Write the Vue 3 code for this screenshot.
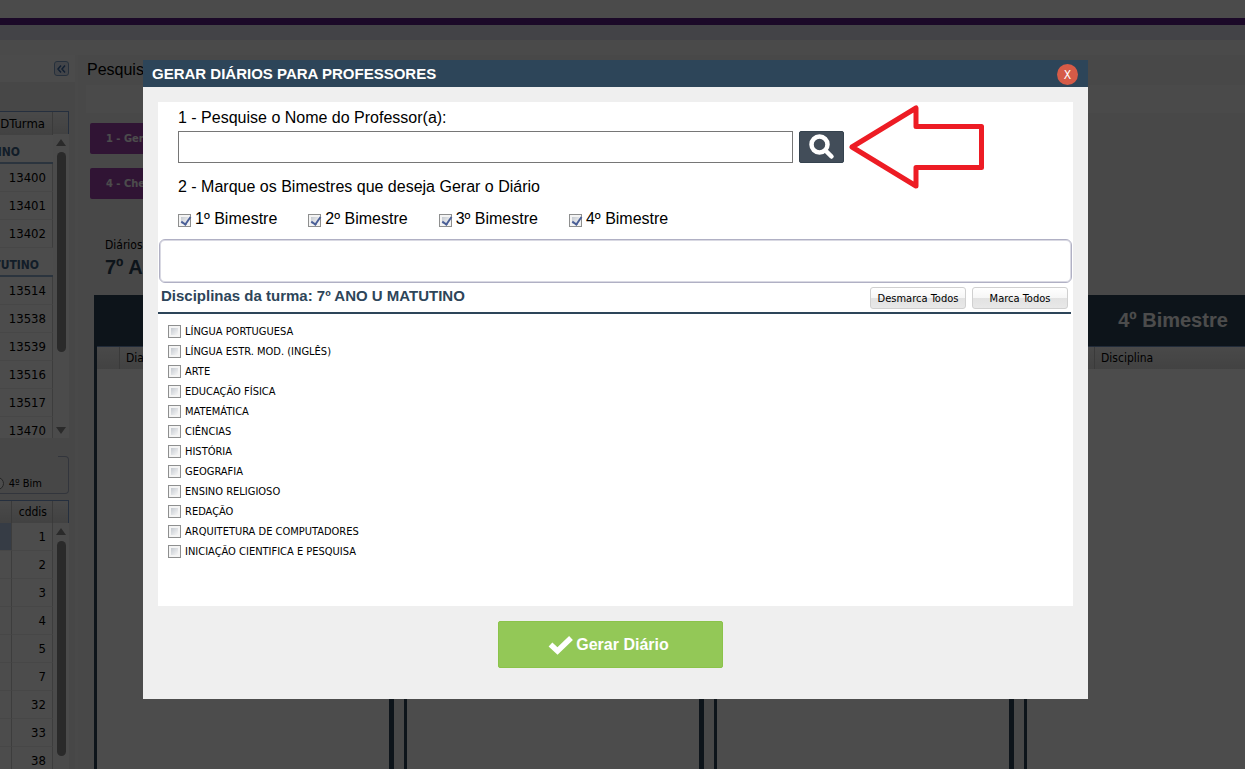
<script setup>
import { ref } from 'vue'

const turmas = [
  { group: 'VESPERTINO', wide: true, ids: [13400, 13401, 13402] },
  { group: 'MATUTINO', wide: false, ids: [13514, 13538, 13539, 13516, 13517, 13470] }
]
const codes = [1, 2, 3, 4, 5, 7, 32, 33, 38]
const quarters = ['1º Bimestre', '2º Bimestre', '3º Bimestre', '4º Bimestre']
const marked = ref([...quarters])
const subjects = [
  'LÍNGUA PORTUGUESA',
  'LÍNGUA ESTR. MOD. (INGLÊS)',
  'ARTE',
  'EDUCAÇÃO FÍSICA',
  'MATEMÁTICA',
  'CIÊNCIAS',
  'HISTÓRIA',
  'GEOGRAFIA',
  'ENSINO RELIGIOSO',
  'REDAÇÃO',
  'ARQUITETURA DE COMPUTADORES',
  'INICIAÇÃO CIENTIFICA E PESQUISA'
]
const chosen = ref([])
const teacher = ref('')
</script>

<template>
  <div class="page">
    <div class="top"></div>
    <div class="subtop"></div>
    <div class="workspace">
      <aside class="sidebar">
        <div class="side-head">
          <button class="collapse" type="button" aria-label="Recolher">
            <svg width="9" height="8" viewBox="0 0 9 8"><path d="M4 0.500 1 4l3 3.500M8 0.500 5 4l3 3.500" /></svg>
          </button>
        </div>
        <div class="grid grid-turmas">
          <div class="grid-main">
            <table>
              <thead><tr><th>CDTurma</th></tr></thead>
              <tbody v-for="t in turmas" :key="t.group">
                <tr class="group"><td :class="{ wide: t.wide }">{{ t.group }}</td></tr>
                <tr v-for="id in t.ids" :key="id"><td>{{ id }}</td></tr>
              </tbody>
            </table>
          </div>
          <div class="scroll">
            <div class="scroll-head"></div>
            <i class="up"></i><div class="thumb"></div><i class="down"></i>
          </div>
        </div>
        <fieldset class="filter">
          <legend></legend>
          <label><input type="radio" name="bim" />4º Bim</label>
        </fieldset>
        <div class="grid grid-codes">
          <div class="grid-main">
            <table>
              <thead><tr><th></th><th class="code">cddis</th></tr></thead>
              <tbody>
                <tr v-for="(c, i) in codes" :key="c">
                  <td :class="{ active: i === 0 }"></td><td class="code">{{ c }}</td>
                </tr>
              </tbody>
            </table>
          </div>
          <div class="scroll">
            <div class="scroll-head"></div>
            <i class="up"></i><div class="thumb"></div>
          </div>
        </div>
      </aside>
      <main class="content">
        <h1>Pesquisa</h1>
        <div class="searchbar"></div>
        <div class="actions">
          <button type="button">1 - Gerar</button>
          <button type="button">4 - Checar</button>
        </div>
        <p class="caption">Diários</p>
        <h2>7º ANO U MATUTINO</h2>
        <div class="columns">
          <section v-for="q in quarters" :key="q" class="column">
            <h3>{{ q }}</h3>
            <div class="col-head"><span></span><span>Dia</span><span>Disciplina</span></div>
          </section>
        </div>
      </main>
    </div>

    <div class="overlay">
      <div class="modal" role="dialog" aria-label="Gerar diários para professores">
        <header class="modal-head">
          <h2>GERAR DIÁRIOS PARA PROFESSORES</h2>
          <button type="button" class="close">X</button>
        </header>
        <div class="panel">
          <div class="form">
            <label for="teacher">1 - Pesquise o Nome do Professor(a):</label>
            <div class="search">
              <input id="teacher" v-model="teacher" type="text" />
              <button type="button" aria-label="Pesquisar">
                <svg width="26" height="26" viewBox="0 0 26 26">
                  <circle cx="10.500" cy="10.500" r="8" fill="none" stroke="#fff" stroke-width="4.500" />
                  <path d="M17 17 22.500 22.500" stroke="#fff" stroke-width="4.500" stroke-linecap="round" />
                </svg>
              </button>
            </div>
            <p>2 - Marque os Bimestres que deseja Gerar o Diário</p>
            <div class="quarters">
              <label v-for="q in quarters" :key="q">
                <input v-model="marked" type="checkbox" :value="q" />{{ q }}
              </label>
            </div>
            <svg class="pointer" width="136" height="86" viewBox="0 0 136 86">
              <path d="M3 43 67 4V22.500H132.500V63.500H67V82Z" />
            </svg>
          </div>
          <div class="result"></div>
          <div class="list-head">
            <h3>Disciplinas da turma: 7º ANO U MATUTINO</h3>
            <button type="button">Desmarca Todos</button>
            <button type="button">Marca Todos</button>
          </div>
          <div class="subjects">
            <label v-for="s in subjects" :key="s">
              <input v-model="chosen" type="checkbox" :value="s" />{{ s }}
            </label>
          </div>
        </div>
        <footer>
          <button type="button" class="generate">
            <svg width="26" height="20" viewBox="0 0 26 20"><path d="M2.500 9.500 9.500 16 23 3" /></svg>
            Gerar Diário
          </button>
        </footer>
      </div>
    </div>
  </div>
</template>

<style>
body { margin: 0; overflow: hidden; }
</style>

<style scoped>
* { box-sizing: border-box; }
h1, h2, h3, p { margin: 0; }
button, input { font: inherit; margin: 0; }
.page {
  height: 100vh;
  display: flex;
  flex-direction: column;
  overflow: hidden;
  background: #f7f7f7;
  color: #000;
  font-family: "Liberation Sans", Arial, sans-serif;
}
.top { height: 25px; flex: none; background: #fbfbfb; border-bottom: 7px solid #5a1f85; }
.subtop { height: 30px; flex: none; background: #f8f8f8; border-top: 15px solid #e2e2ee; }
.workspace { flex: 1; min-height: 0; display: flex; }

.sidebar {
  width: 78px;
  flex: none;
  display: flex;
  flex-direction: column;
  padding-right: 6px;
  background: #eee;
  border-right: 3px solid #f4f4f4;
  font-family: "DejaVu Sans Condensed", "DejaVu Sans", sans-serif;
  overflow: hidden;
}
.side-head {
  height: 27px;
  flex: none;
  margin-right: -6px;
  padding: 6px 6px 0 0;
  display: flex;
  justify-content: flex-end;
  background: #fbfbfb;
}
.collapse {
  width: 15px;
  height: 15px;
  padding: 0;
  border: 1px solid #7fa0c8;
  border-radius: 3px;
  background: #dfe8f4;
  display: grid;
  place-items: center;
}
.collapse svg { fill: none; stroke: #3f6ba5; stroke-width: 1.5; }
.grid { display: flex; overflow: hidden; border-top: 1px solid #7d9fd0; background: #fdfdfd; font-size: 12px; }
.grid-turmas { height: 327px; flex: none; margin-top: 29px; }
.grid-codes { flex: 1; margin-top: 6px; }
.grid-main { flex: 1; min-width: 0; display: flex; justify-content: flex-end; overflow: hidden; }
table { width: 200px; flex: none; border-collapse: separate; border-spacing: 0; table-layout: fixed; align-self: flex-start; }
th {
  height: 22px;
  padding: 0 7px;
  font-size: 13px;
  font-weight: 400;
  text-align: right;
  background: linear-gradient(#f6f6f6, #dcdcdc);
  border-right: 1px solid #c4c4c4;
}
.grid-turmas th { height: 23px; }
td { height: 28px; padding: 0 6px; font-size: 13px; text-align: right; border-right: 1px solid #ccc; border-bottom: 1px solid #ededed; }
.group td { height: 29px; padding: 6px 14px 0; font-size: 12px; line-height: 14px; font-weight: 700; color: #3e6288; border-right: 0; border-bottom: 2px solid #8faed0; }
.group td.wide { padding-right: 33px; }
.code { width: 41px; padding-left: 0; }
th.code { padding-right: 5px; font-size: 12px; }
.active { background: #b5c8e6; }
.scroll { width: 16px; flex: none; display: flex; flex-direction: column; align-items: center; background: #fcfcfc; }
.scroll-head { width: 100%; height: 22px; flex: none; border-right: 1px solid #7d9fd0; background: linear-gradient(#f6f6f6, #dcdcdc); }
.up, .down { width: 0; height: 0; flex: none; border: 5px solid transparent; }
.up { margin-top: 5px; border-top: 0; border-bottom: 7px solid #8c8c8c; }
.down { margin: auto 0 4px; border-bottom: 0; border-top: 7px solid #8c8c8c; }
.thumb { width: 9px; height: 200px; flex: none; margin-top: 6px; border-radius: 5px; background: #8c8c8c; }
.grid-codes .thumb { flex: 1; margin-bottom: 13px; }
.filter {
  height: 38px;
  min-width: 0;
  flex: none;
  margin: 18px 0 0;
  padding: 18px 26px 0 0;
  border: 1px solid #a9b1c8;
  border-left: 0;
  border-radius: 0 4px 4px 0;
  display: flex;
  justify-content: flex-end;
  font-size: 11px;
}
.filter legend { width: 58px; height: 1px; margin-right: -26px; padding: 0; }
.filter label { display: flex; align-items: center; height: 16px; white-space: nowrap; }
.filter input { width: 13px; height: 13px; margin-right: 5px; }

.content { flex: 1; min-width: 0; background: #f0f0f0; overflow: hidden; display: flex; flex-direction: column; }
.content h1 { height: 30px; padding-left: 9px; font-size: 16px; font-weight: 400; line-height: 30px; }
.searchbar { height: 28px; margin-left: 8px; background: #f8f8f8; }
.actions { display: flex; flex-direction: column; align-items: flex-start; gap: 14px; margin: 10px 0 0 12px; }
.actions button {
  width: 140px;
  height: 31px;
  padding: 0 0 0 16px;
  border: 0;
  border-radius: 2px;
  background: #a043b0;
  color: #fff;
  text-align: left;
  font: 700 11px "DejaVu Sans Condensed", "DejaVu Sans", sans-serif;
}
.caption { margin: 38px 0 0 27px; font: 12px/16px "DejaVu Sans Condensed", "DejaVu Sans", sans-serif; }
.content h2 { margin-left: 27px; font-size: 20px; line-height: 28px; color: #2d4559; }
.columns { flex: 1; display: flex; gap: 10px; margin: 14px 0 0 16px; }
.column { width: 300px; flex: none; background: #fdfdfd; border: solid #2d4559; border-width: 0 5px 0 3px; }
.column h3 { height: 51px; font-size: 20px; line-height: 51px; text-align: center; background: #2d4559; color: #fff; }
.col-head { height: 23px; display: flex; border-top: 1px solid #6f92c0; background: linear-gradient(#f4f4f4, #dedede); font: 12px/22px "DejaVu Sans Condensed", "DejaVu Sans", sans-serif; }
.col-head span { width: 45px; padding-left: 6px; border-right: 1px solid #c4c4c4; }
.col-head span:first-child { width: 23px; }
.col-head span:last-child { flex: 1; border: 0; }

.overlay {
  position: fixed;
  inset: 0;
  display: flex;
  justify-content: center;
  align-items: flex-start;
  padding: 60px 14px 0 0;
  background: rgba(0, 0, 0, .7);
}
.modal { width: 945px; max-width: 100%; padding-bottom: 31px; background: #efefef; }
.modal-head { height: 27px; padding: 0 10px 0 9px; display: flex; align-items: center; justify-content: space-between; background: #2d4559; color: #fff; }
.modal-head h2 { font-size: 15px; }
.close { width: 21px; height: 21px; margin-top: 2px; padding: 0; border: 0; border-radius: 50%; background: #d65b47; color: #fff; font: 12px "DejaVu Sans Condensed", sans-serif; }
.panel { margin: 15px; padding-bottom: 45px; background: #fff; }
.form { position: relative; padding: 6px 20px 0; font-size: 16px; line-height: 20px; }
.form > label { display: block; height: 23px; }
.search { display: flex; gap: 6px; }
.search input { width: 615px; height: 32px; padding: 0 6px; border: 1px solid #767676; background: #fff; }
.search button { width: 45px; height: 32px; padding: 0; border: 1px solid #35424e; border-radius: 2px; background: #424d59; display: grid; place-items: center; }
.form p { margin-top: 14px; }
.quarters { display: flex; gap: 31px; margin-top: 12px; height: 30px; }
.quarters label { display: flex; align-items: center; height: 20px; }
.quarters input { margin: 2px 4px 0 0; }
input[type="checkbox"] {
  appearance: none;
  width: 13px;
  height: 13px;
  flex: none;
  border: 1px solid #8e8f8f;
  background: linear-gradient(135deg, #c4c9d0, #f6f6f6) content-box, #f4f4f4;
  padding: 2px;
}
input[type="checkbox"]:checked::after {
  content: "";
  display: block;
  width: 4px;
  height: 8px;
  margin: -2px 0 0 2px;
  border: solid #4a5f97;
  border-width: 0 2px 2px 0;
  transform: rotate(35deg);
}
.pointer { position: absolute; left: 691px; top: 2px; fill: #fff; stroke: #ed1c24; stroke-width: 5; stroke-linejoin: round; }
.result { height: 44px; margin: 0 1px; border: 1px solid #b0b0c4; border-radius: 6px; box-shadow: inset 0 0 0 1px #d9d9e3; }
.list-head { display: flex; align-items: center; gap: 6px; height: 31px; margin-right: 2px; padding: 0 3px; border-bottom: 2px solid #2d4559; }
.list-head h3 { flex: 1; font-size: 15px; line-height: 26px; align-self: flex-start; color: #2d4559; }
.list-head button {
  width: 96px;
  height: 22px;
  padding: 1px 0 0;
  border: 1px solid #d0d0d0;
  border-radius: 3px;
  background: linear-gradient(#fff, #f6f6f6 50%, #e2e2e2 50%, #e8e8e8);
  font: 11px "DejaVu Sans Condensed", "DejaVu Sans", sans-serif;
  color: #000;
}
.subjects { display: flex; flex-direction: column; align-items: flex-start; gap: 4px; padding: 10px 10px 1px; font: 11px/16px "DejaVu Sans Condensed", "DejaVu Sans", sans-serif; }
.subjects label { display: flex; align-items: center; height: 16px; }
.subjects input { margin: 0 4px 1px 0; }
footer { display: flex; justify-content: center; padding-right: 10px; }
.generate {
  width: 225px;
  height: 47px;
  padding: 0 4px 0 0;
  display: flex;
  align-items: center;
  justify-content: center;
  gap: 2px;
  border: 1px solid #8bc34a;
  border-radius: 2px;
  background: #93c857;
  color: #fff;
  font-size: 16px;
  font-weight: 700;
}
.generate svg { fill: none; stroke: #fff; stroke-width: 5.5; }
</style>
